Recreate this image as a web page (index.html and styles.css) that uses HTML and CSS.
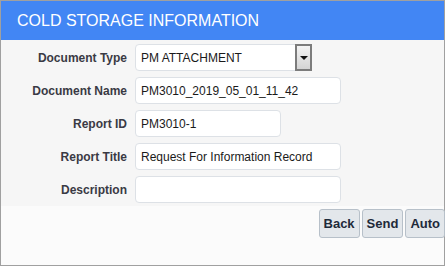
FILE: index.html
```html
<!DOCTYPE html>
<html lang="en">
<head>
    <meta charset="UTF-8">
    <title>Cold Storage Information</title>
    <link rel="stylesheet" href="styles.css">
</head>
<body>
    <div class="panel">
        <div class="header">COLD STORAGE INFORMATION</div>

        <form class="fields">
            <label class="label" for="docType">Document Type</label>
            <div class="select">
                <span class="select-value" id="docType">PM ATTACHMENT</span>
                <span class="select-btn"><span class="caret"></span></span>
            </div>

            <label class="label" for="docName">Document Name</label>
            <input class="input wide" id="docName" type="text" value="PM3010_2019_05_01_11_42">

            <label class="label" for="reportId">Report ID</label>
            <input class="input short" id="reportId" type="text" value="PM3010-1">

            <label class="label" for="reportTitle">Report Title</label>
            <input class="input wide" id="reportTitle" type="text" value="Request For Information Record">

            <label class="label" for="desc">Description</label>
            <input class="input wide" id="desc" type="text" value="">
        </form>

        <div class="actions">
            <button class="btn">Back</button>
            <button class="btn">Send</button>
            <button class="btn">Auto</button>
        </div>
    </div>
</body>
</html>
```

FILE: styles.css
```css
*{
    box-sizing: border-box;
}

body {
    margin: 0;
    font-family: "Liberation Sans", Arial, sans-serif;
}

.panel {
    width: 445px;
    height: 266px;
    border: 1px solid #a0a0a0;
    background-color: #fbfbfb;
    display: flex;
    flex-direction: column;
}

.header {
    height: 39px;
    background-color: #4286f4;
    color: #fff;
    font-size: 16px;
    padding: 11px 0 0 16px;
}

.fields {
    margin: 0;
    background-color: #f6f6f6;
    display: grid;
    grid-template-columns: 126px auto;
    column-gap: 8px;
    row-gap: 6px;
    align-items: center;
    justify-items: start;
    padding: 4px 0 3px;
}

.label {
    justify-self: end;
    font-weight: bold;
    font-size: 12px;
    color: #3a3a44;
}

.input, .select {
    height: 27px;
    border: 1px solid #dde1e6;
    border-radius: 4px;
    background-color: #fff;
    font-family: "Liberation Sans", Arial, sans-serif;
    font-size: 12px;
    color: #1a1a1a;
    padding: 0 5px;
    margin: 0;
}
.wide {
    width: 206px;
}
.short {
    width: 146px;
}

.select {
    width: 177px;
    display: flex;
    align-items: center;
    padding-right: 0;
}
.select-value {
    flex: 1;
}
.select-btn {
    width: 17px;
    height: 27px;
    margin-right: -1px;
    border: 2px solid #7c7c7c;
    background: linear-gradient(#f4f4f4, #d4d4d4);
    display: flex;
    align-items: center;
    justify-content: center;
}
.caret {
    width: 0;
    height: 0;
    border-left: 4px solid transparent;
    border-right: 4px solid transparent;
    border-top: 4px solid #111;
}

.actions {
    display: flex;
    justify-content: flex-end;
    gap: 2px;
    padding-top: 3px;
    margin-right: -1px;
}

.btn {
    height: 29px;
    padding: 0 4px;
    border: 1px solid #b7c0c9;
    border-radius: 3px;
    background-color: #e3e7eb;
    font-family: "Liberation Sans", Arial, sans-serif;
    font-weight: bold;
    font-size: 13px;
    color: #1e2a3a;
}
```
